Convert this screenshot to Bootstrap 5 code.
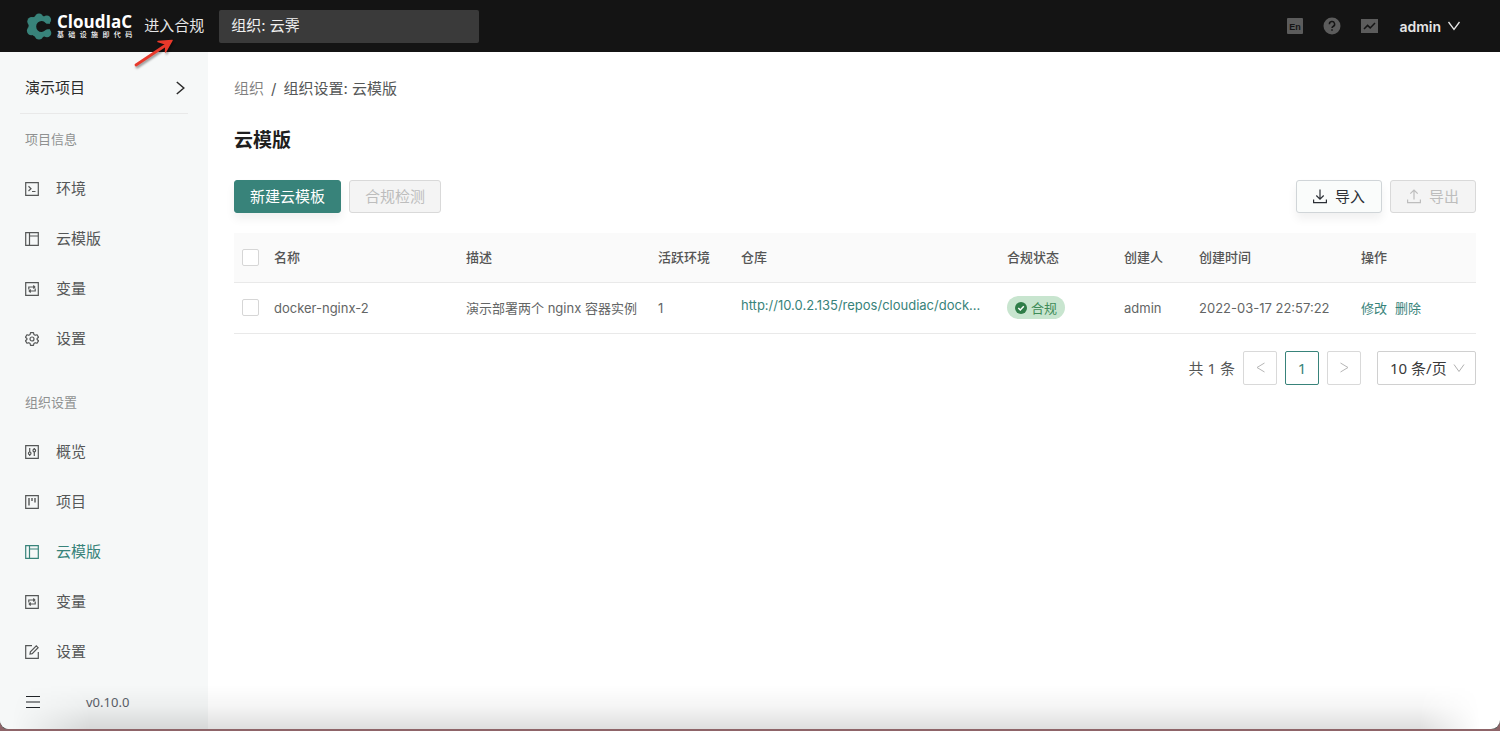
<!DOCTYPE html>
<html lang="zh-CN">
<head>
<meta charset="utf-8">
<meta name="viewport" content="width=device-width, initial-scale=1">
<title>CloudIaC - 云模版</title>
<link href="https://cdn.jsdelivr.net/npm/bootstrap@5.3.0/dist/css/bootstrap.min.css" rel="stylesheet">
<style>
  :root { --teal: #38837a; --ink: #555757; --line: #e9e9e9; }
  body { font-family: Inter, "Noto Sans CJK SC", sans-serif; font-size: 15px; line-height: 22px; color: var(--ink); background: #8e6468; }
  a { color: inherit; text-decoration: none; }
  svg { display: block; flex: none; fill: none; stroke: currentColor; }
  .app-shell { min-height: calc(100vh - 2px); border-bottom-left-radius: 9px; border-bottom-right-radius: 9px; background: #fff; box-shadow: 0 1px 0 #5e6260; overflow: hidden; position: relative; }
  .app-shell::after { content: ""; position: absolute; left: 0; right: 0; bottom: 0; height: 44px; pointer-events: none;
    background: linear-gradient(to bottom, transparent, rgba(0,0,0,.04) 50%, rgba(0,0,0,.13));
    -webkit-mask-image: linear-gradient(to right, transparent 12px, #000 90px, #000 calc(100% - 80px), transparent calc(100% - 20px)); }
  .topbar { height: 52px; background: #141414; color: #e6e6e6; padding-left: 26px; padding-right: 39px; }
  .brand-title { font-family: "Open Sans", sans-serif; font-weight: 700; font-size: 17px; line-height: 18px; color: #fff; }
  .brand-sub { font-size: 7px; line-height: 8px; font-weight: 500; text-align-last: justify; color: #fff; }
  .org-select { appearance: none; width: 260px; height: 33px; border: 0; border-radius: 2px; background: #3a3a3a; color: #f0f0f0; padding: 0 12px; margin-left: 15px; }
  .tool-set { gap: 20px; }
  .tool-icon { color: #5c5c5c; }
  .user-btn { font-size: 14px; font-weight: 600; color: #e6e6e6; gap: 6px; }
  .pointer-arrow { position: absolute; left: 130px; top: 34px; stroke: #e8392b; filter: drop-shadow(1px 2px 1px rgba(0,0,0,.4)); }
  .side { width: 208px; background: #f6f8f8; padding-top: 11px; }
  .side-link svg { stroke-width: 1.2; }
  .project-btn { height: 51px; margin: 0 20px; padding: 0 3px 0 5px; border-bottom: 1px solid var(--line); color: #2b2b2b; }
  .side-title { height: 50px; padding-left: 25px; font-size: 13px; color: #8f9191; }
  .side-group { margin-top: 13px; }
  .side-link { height: 50px; padding-left: 25px; gap: 17px; }
  .side-link.current { color: var(--teal); }
  .side-foot { height: 50px; padding-left: 26px; gap: 46px; font-family: "Noto Sans", sans-serif; font-size: 13px; color: #5b6068; }
  .content-pane { padding: 26px 24px 24px 26px; }
  .crumbs { gap: 7px; }
  .page-title { font-size: 19px; line-height: 28px; font-weight: 600; color: #1f1f1f; margin: 27px 0 25px; }
  .act { height: 33px; border: 1px solid #d0d5d8; border-radius: 3px; padding: 0 15px; background: #fafcfb; color: #2c3036; box-shadow: 0 6px 10px rgba(0,0,0,.06); }
  .act.with-icon { padding: 0 16px; }
  .act.primary { background: var(--teal); border-color: var(--teal); color: #fff; }
  .act:disabled { background: #f4f4f4; border-color: #d9d9d9; color: #bdbdbd; box-shadow: none; }
  .data { table-layout: fixed; width: 100%; font-size: 13px; line-height: 20px; }
  .data th, .data td { padding: 0 8px; vertical-align: middle; border-bottom: 1px solid var(--line); white-space: nowrap; }
  .data th { height: 49px; font-weight: 500; background: #fafafa; color: #555; }
  .data td { height: 51px; color: #636565; }
  .data a { color: var(--teal); }
  .tick { appearance: none; display: block; width: 17px; height: 17px; margin: 0; border: 1px solid #d6d6d6; border-radius: 2px; background: #fff; }
  .c-tick { width: 32px; } .c-env { width: 83px; } .c-repo { width: 266px; } .c-state { width: 117px; }
  .c-by { width: 75px; } .c-time { width: 162px; } .c-ops { width: 123px; }
  .repo { padding-bottom: 5px; }
  .pass { height: 23px; padding: 0 8px; gap: 4px; border-radius: 12px; background: #c8e5cf; color: #3f8b58; }
  .pager { margin-top: 17px; gap: 8px; font-family: "Noto Sans", "Noto Sans CJK SC", sans-serif; }
  .pg { width: 34px; height: 34px; padding: 0; border: 1px solid #d9d9d9; border-radius: 2px; background: #fff; color: #b5b5b5; }
  .pg.on { border-color: var(--teal); color: var(--teal); }
  .size-box { margin-left: 8px; }
  .size-box select { appearance: none; width: 99px; height: 34px; padding: 0 12px; border: 1px solid #d0d0d0; border-radius: 2px; background: #fff; color: #3a3a3a; }
  .size-box svg { position: absolute; right: 11px; top: 12px; color: #b0b0b0; pointer-events: none; }
</style>
</head>
<body>
<svg width="0" height="0" class="position-absolute" aria-hidden="true">
  <symbol id="i-frame" viewBox="0 0 14 14"><path d="M.7.7h12.6v12.6H.7zM4.500.7v12.6M4.500 4h8.800"/></symbol>
  <symbol id="i-loop" viewBox="0 0 14 14"><path d="M.7.7h12.6v12.6H.7zM3.800 7.500V5h5.500M8.300 3.500 9.800 5 8.300 6.500M10.200 6.500V9H4.700M5.700 7.500 4.200 9l1.500 1.500"/></symbol>
</svg>
<div class="app-shell d-flex flex-column">
  <header class="topbar d-flex align-items-center">
    <a href="#" class="d-flex align-items-center" aria-label="CloudIaC">
      <svg width="27" height="27" viewBox="0 0 27 27"><g fill="#38837a" stroke="none"><circle cx="13.500" cy="13.500" r="11"/><circle cx="13" cy="4.800" r="4.300"/><circle cx="20.800" cy="6.800" r="4.300"/><circle cx="5.800" cy="8.500" r="4.500"/><circle cx="5.400" cy="17.800" r="4.500"/><circle cx="13" cy="22.200" r="4.300"/><circle cx="21" cy="20" r="4.300"/></g><path fill="#141414" stroke="none" d="M27 10.800h-4.500c-1.200.2-2.200-.1-2.900-.9a5.400 5.400 0 1 0 0 7.200c.7-.8 1.700-1.100 2.900-.9H27z"/></svg>
      <span class="d-flex flex-column ms-1">
        <span class="brand-title">CloudIaC</span>
        <span class="brand-sub">基础设施即代码</span>
      </span>
    </a>
    <a href="#" class="ms-2 ps-1">进入合规</a>
    <select class="org-select" aria-label="组织"><option>组织: 云霁</option></select>
    <div class="tool-set ms-auto d-flex align-items-center">
      <a href="#" class="tool-icon" aria-label="English"><svg width="16" height="16" viewBox="0 0 16 16"><rect width="16" height="16" rx="1" fill="currentColor" stroke="none"/><text x="8" y="11.500" text-anchor="middle" font-family="Liberation Sans, sans-serif" font-weight="700" font-size="9" fill="#141414" stroke="none">En</text></svg></a>
      <a href="#" class="tool-icon" aria-label="帮助"><svg width="18" height="18" viewBox="0 0 18 18"><circle cx="9" cy="9" r="8.500" fill="currentColor" stroke="none"/><path stroke="#141414" stroke-width="1.500" d="M6.400 7.200a2.600 2.600 0 1 1 3.700 2.300c-.8.400-1.100.8-1.100 1.600M9 12.200v1.600"/></svg></a>
      <a href="#" class="tool-icon" aria-label="监控"><svg width="18" height="14" viewBox="0 0 18 14"><rect width="17" height="14" fill="currentColor" stroke="none"/><path stroke="#141414" stroke-width="1.500" d="m3 10 3.600-3.600 2.600 2.500L14 4"/></svg></a>
      <button type="button" class="user-btn btn p-0 border-0 d-flex align-items-center">admin <svg width="14" height="10" viewBox="0 0 14 10" stroke-width="1.300"><path d="m1.500 1 5.500 7.500L12.500 1"/></svg></button>
    </div>
    <svg class="pointer-arrow" width="50" height="38" viewBox="0 0 50 38" stroke-linecap="round" stroke-linejoin="round"><path stroke-width="2.800" d="M6 31 39 9"/><path fill="#e8392b" stroke-width="1.500" d="m42 6.500-14 1 8 2.500-.500 8z"/></svg>
  </header>
  <div class="d-flex flex-grow-1">
    <nav class="side flex-shrink-0 d-flex flex-column">
      <a href="#" class="project-btn d-flex align-items-center justify-content-between"><span>演示项目</span><svg width="9" height="14" viewBox="0 0 9 14" stroke-width="1.500"><path d="m.8 1 7 6-7 6"/></svg></a>
      <div class="side-title d-flex align-items-center">项目信息</div>
      <a href="#" class="side-link d-flex align-items-center"><svg width="14" height="14" viewBox="0 0 14 14"><path d="M.7.7h12.600v12.600H.7zM3.500 4.300 6 6.700 3.500 9M7 9.500h3.500"/></svg>环境</a>
      <a href="#" class="side-link d-flex align-items-center"><svg width="14" height="14"><use href="#i-frame"/></svg>云模版</a>
      <a href="#" class="side-link d-flex align-items-center"><svg width="14" height="14"><use href="#i-loop"/></svg>变量</a>
      <a href="#" class="side-link d-flex align-items-center"><svg width="14" height="14" viewBox="0 0 14 14" stroke-linejoin="round"><path d="m5.500.6-.4 1.900-1.300.8L2 2.700.5 5.200l1.400 1.300v1L.5 8.800 2 11.300l1.800-.6 1.300.8.400 1.900h3l.4-1.900 1.300-.8 1.800.6 1.500-2.500-1.400-1.300v-1l1.400-1.300L12 2.700l-1.800.6-1.300-.8L8.500.6z"/><circle cx="7" cy="7" r="2"/></svg>设置</a>
      <div class="side-title side-group d-flex align-items-center">组织设置</div>
      <a href="#" class="side-link d-flex align-items-center"><svg width="14" height="14" viewBox="0 0 14 14"><path d="M.7.7h12.600v12.600H.7zM4.700 3v4M4.700 9.700V11M9.300 3v1.200M9.300 7v4"/><circle cx="4.700" cy="8.300" r="1.300"/><circle cx="9.300" cy="5.500" r="1.300"/></svg>概览</a>
      <a href="#" class="side-link d-flex align-items-center"><svg width="14" height="14" viewBox="0 0 14 14"><path d="M.7.7h12.600v12.600H.7z"/><path stroke-width="1.400" d="M4 3v7.500M7 3v3M10 3v4.500"/></svg>项目</a>
      <a href="#" class="side-link current d-flex align-items-center" aria-current="page"><svg width="14" height="14"><use href="#i-frame"/></svg>云模版</a>
      <a href="#" class="side-link d-flex align-items-center"><svg width="14" height="14"><use href="#i-loop"/></svg>变量</a>
      <a href="#" class="side-link d-flex align-items-center"><svg width="14" height="14" viewBox="0 0 14 14"><path d="M7 .7H.7v12.600h12.600V7M5 9l.4-2.200L11.300.9l1.800 1.800-5.900 5.900z"/></svg>设置</a>
      <div class="side-foot d-flex align-items-center"><button type="button" class="btn p-0 border-0" aria-label="收起菜单"><svg width="14" height="14" viewBox="0 0 14 14" stroke-width="1.200"><path d="M0 1.500h14M0 7h14M0 12.500h14"/></svg></button>v0.10.0</div>
    </nav>
    <main class="content-pane flex-grow-1">
      <nav aria-label="面包屑" class="crumbs d-flex"><a href="#" class="text-black-50">组织</a><span>/</span><span>组织设置: 云模版</span></nav>
      <h1 class="page-title">云模版</h1>
      <div class="d-flex gap-2 mb-3 pb-1">
        <button type="button" class="act primary">新建云模板</button>
        <button type="button" class="act" disabled>合规检测</button>
        <button type="button" class="act with-icon ms-auto d-flex align-items-center gap-2"><svg width="14" height="15" viewBox="0 0 14 15" stroke-width="1.200"><path d="M7 .5v9.500M3.300 6.500 7 10.200l3.700-3.700M.6 10.500v3.200h12.800v-3.200"/></svg>导入</button>
        <button type="button" class="act with-icon d-flex align-items-center gap-2" disabled><svg width="14" height="15" viewBox="0 0 14 15" stroke-width="1.200"><path d="M7 10.500V1M3.300 4.700 7 1l3.700 3.700M.6 10.500v3.200h12.800v-3.200"/></svg>导出</button>
      </div>
      <table class="data">
        <colgroup><col class="c-tick"><col><col><col class="c-env"><col class="c-repo"><col class="c-state"><col class="c-by"><col class="c-time"><col class="c-ops"></colgroup>
        <thead><tr><th><input type="checkbox" class="tick" aria-label="全选"></th><th>名称</th><th>描述</th><th>活跃环境</th><th>仓库</th><th>合规状态</th><th>创建人</th><th>创建时间</th><th>操作</th></tr></thead>
        <tbody><tr>
          <td><input type="checkbox" class="tick" aria-label="选择 docker-nginx-2"></td>
          <td>docker-nginx-2</td><td>演示部署两个 nginx 容器实例</td><td>1</td>
          <td><a href="#" class="repo d-block">http://10.0.2.135/repos/cloudiac/dock...</a></td>
          <td><span class="pass d-inline-flex align-items-center"><svg width="12" height="12" viewBox="0 0 12 12"><circle cx="6" cy="6" r="6" fill="#2f7d48" stroke="none"/><path stroke="#fff" stroke-width="1.500" d="m3.300 6 2 2 3.500-3.700"/></svg>合规</span></td>
          <td>admin</td><td>2022-03-17 22:57:22</td>
          <td><a href="#">修改</a><a href="#" class="ms-2">删除</a></td>
        </tr></tbody>
      </table>
      <div class="pager d-flex justify-content-end align-items-center">
        <span>共 1 条</span>
        <button type="button" class="pg d-flex align-items-center justify-content-center" aria-label="上一页"><svg width="9" height="11" viewBox="0 0 9 11"><path d="M8.500 1 1 5.500 8.500 10"/></svg></button>
        <button type="button" class="pg on">1</button>
        <button type="button" class="pg d-flex align-items-center justify-content-center" aria-label="下一页"><svg width="9" height="11" viewBox="0 0 9 11"><path d="M.5 1 8 5.500.5 10"/></svg></button>
        <div class="size-box position-relative"><select aria-label="每页条数"><option>10 条/页</option></select><svg width="12" height="10" viewBox="0 0 12 10"><path d="M1 1.500 6 8.500l5-7"/></svg></div>
      </div>
    </main>
  </div>
</div>
<script src="https://cdn.jsdelivr.net/npm/bootstrap@5.3.0/dist/js/bootstrap.bundle.min.js"></script>
</body>
</html>
